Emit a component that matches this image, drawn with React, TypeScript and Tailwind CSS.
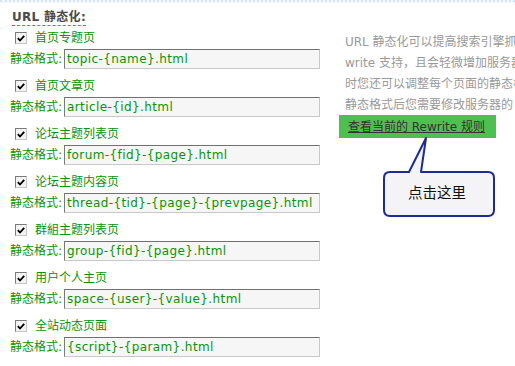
import React from "react";

const groups = [
  { label: "首页专题页", value: "topic-{name}.html" },
  { label: "首页文章页", value: "article-{id}.html" },
  { label: "论坛主题列表页", value: "forum-{fid}-{page}.html" },
  { label: "论坛主题内容页", value: "thread-{tid}-{page}-{prevpage}.html" },
  { label: "群組主题列表页", value: "group-{fid}-{page}.html" },
  { label: "用户个人主页", value: "space-{user}-{value}.html" },
  { label: "全站动态页面", value: "{script}-{param}.html" },
];

function Check() {
  return (
    <span className="inline-flex h-[12px] w-[12px] items-center justify-center border border-t-[#7a7a7a] border-l-[#7a7a7a] border-b-[#c8c8c8] border-r-[#c8c8c8] bg-[#f2f2f2]">
      <svg width="8" height="7" viewBox="0 0 8 7">
        <path d="M0.8 3.2 L3 5.5 L7.2 0.8" stroke="#000" strokeWidth="1.8" fill="none" />
      </svg>
    </span>
  );
}

export default function App() {
  return (
    <div
      className="relative h-[366px] w-[515px] overflow-hidden bg-white text-[12px]"
      style={{ fontFamily: '"DejaVu Sans", "Noto Sans CJK SC", sans-serif' }}
    >
      <div className="h-[3px] border-t-2 border-dotted border-[#d4e4f2] bg-[#f3f8fc]" />
      <div className="flex">
        <div className="w-[339px] shrink-0">
          <div className="pl-[12px] pt-[5px]">
            <span className="inline-block h-[17px] border-b border-dashed border-[#e05050] font-bold leading-[16px] tracking-[0.3px] text-[#4a4a4a]">
              URL 静态化:
            </span>
          </div>
          <div className="mt-[2px] flex flex-col gap-[7px]">
            {groups.map((g) => (
              <div key={g.label} className="flex flex-col">
                <div className="flex h-[20px] items-center pl-[15px] text-[#0a930a]">
                  <Check />
                  <span className="ml-[8px] leading-[20px]">{g.label}</span>
                </div>
                <div className="mt-[1px] flex h-[20px] items-center pl-[10px]">
                  <span className="w-[54px] text-[#0a930a]">静态格式:</span>
                  <div className="flex h-[20px] w-[256px] items-center border border-t-[#707070] border-l-[#7a7a7a] border-b-[#c8c8c8] border-r-[#c8c8c8] bg-[#f6f6f6] pl-[2px] tracking-[0.4px] text-[#0a930a]">
                    {g.value}
                  </div>
                </div>
              </div>
            ))}
          </div>
        </div>
        <div className="flex flex-col pt-[29px]">
          <div className="whitespace-nowrap pl-[6px] leading-[21px] text-[#999]">
            <div>URL 静态化可以提高搜索引擎抓取，开启本功能需要对 Web 服务器增加相应的 Re</div>
            <div>write 支持，且会轻微增加服务器负担。同</div>
            <div>时您还可以调整每个页面的静态格式，但不得删除其中的标记</div>
            <div>静态格式后您需要修改服务器的 Rewrite 规则设置</div>
          </div>
          <div className="-mt-px flex h-[23px] w-[157px] items-center bg-[#4fc04f] pl-[9px]">
            <span className="whitespace-nowrap text-[#333] underline">查看当前的 Rewrite 规则</span>
          </div>
        </div>
      </div>
      <svg className="absolute left-[380px] top-[135px]" width="120" height="85" viewBox="0 0 120 85">
        <path
          d="M10 37 L29 37 L46 3 L41 37 L108 37 Q114 37 114 43 L114 75 Q114 81 108 81 L10 81 Q4 81 4 75 L4 43 Q4 37 10 37 Z"
          fill="#f4f4f7"
          stroke="#1c2b95"
          strokeWidth="2"
          strokeLinejoin="round"
        />
        <text x="57" y="63" textAnchor="middle" fontSize="14.5" fill="#111" fontFamily='"Noto Sans CJK SC", sans-serif'>
          点击这里
        </text>
      </svg>
    </div>
  );
}
